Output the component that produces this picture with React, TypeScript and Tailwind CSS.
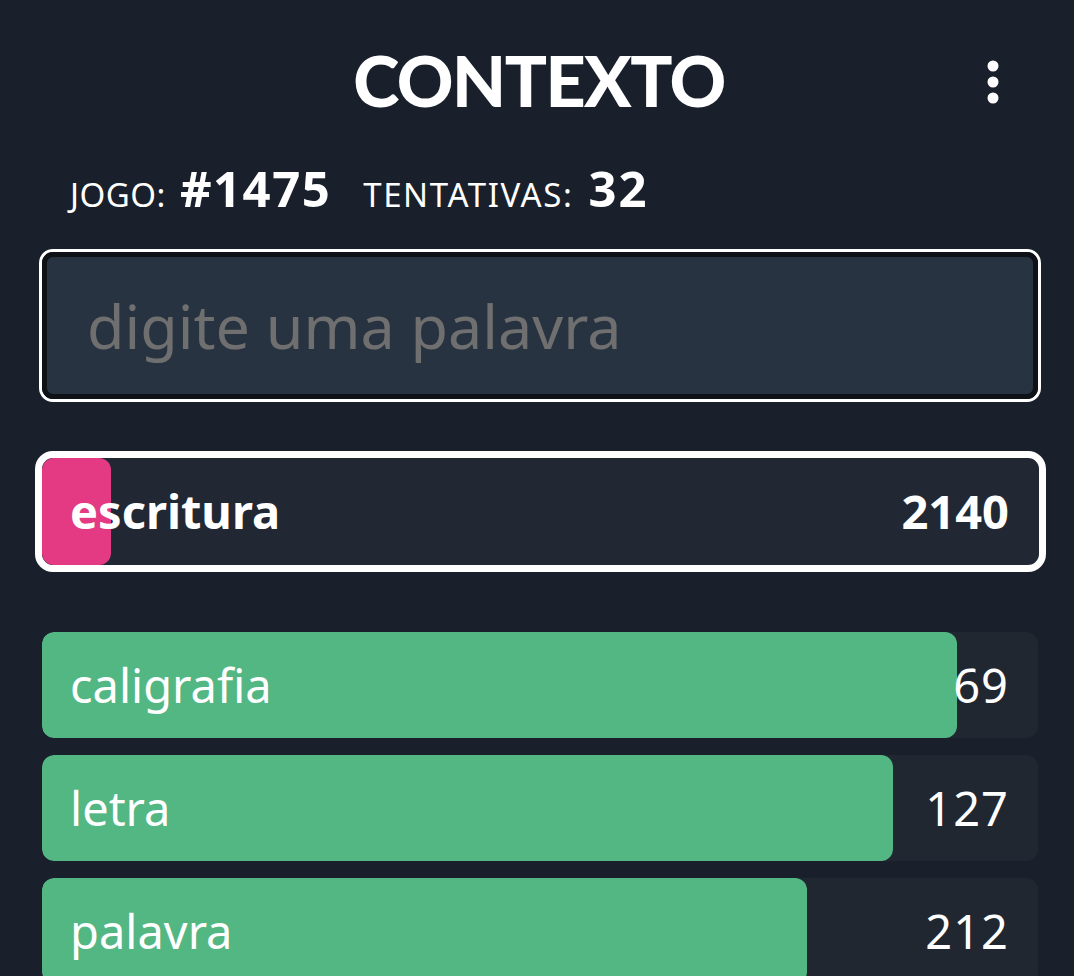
const guesses = [
  { word: 'caligrafia', distance: 69, pct: 91.9 },
  { word: 'letra', distance: 127, pct: 85.4 },
  { word: 'palavra', distance: 212, pct: 76.8 },
]

function Dots() {
  return (
    <svg width="14" height="44" viewBox="0 0 14 44" className="text-white">
      <circle cx="7" cy="6" r="5.5" fill="currentColor" />
      <circle cx="7" cy="22" r="5.5" fill="currentColor" />
      <circle cx="7" cy="38" r="5.5" fill="currentColor" />
    </svg>
  )
}

function Row({ word, distance, pct }: { word: string; distance: number; pct: number }) {
  return (
    <div className="relative h-[106px] overflow-hidden rounded-[12px] bg-[#212731]">
      <div
        className="absolute inset-y-0 left-0 rounded-[12px] bg-[#53b784]"
        style={{ width: `${pct}%` }}
      />
      <div className="relative flex h-full items-center justify-between pl-[28px] pr-[29px] text-[47px] leading-none text-white">
        <span>{word}</span>
        <span className="tracking-[1px]">{distance}</span>
      </div>
    </div>
  )
}

export default function App() {
  return (
    <div
      className="min-h-[976px] overflow-hidden bg-[#19202b] text-white"
      style={{ fontFamily: '"Noto Sans", Lato, sans-serif' }}
    >
      <header className="relative flex h-[160px] items-center justify-center">
        <h1
          className="pl-[4px] text-[70px] font-black leading-none tracking-[-1.5px]"
          style={{ fontFamily: 'Lato, sans-serif' }}
        >
          CONTEXTO
        </h1>
        <div className="absolute right-[74px] top-[60px]">
          <Dots />
        </div>
      </header>

      <div className="mt-[4px] flex h-[50px] items-baseline pl-[70px] text-[33px] leading-none">
        <span className="tracking-[0.5px]">JOGO:</span>
        <span className="ml-[14px] text-[49px] font-bold tracking-[1.5px]">#1475</span>
        <span className="ml-[32px] tracking-[1.6px]">TENTATIVAS:</span>
        <span className="ml-[15px] text-[49px] font-bold tracking-[2px]">32</span>
      </div>

      <div className="ml-[39px] mr-[33px] mt-[35px] rounded-[14px] border-[3px] border-white">
        <div className="flex h-[147px] items-center rounded-[11px] border-[5px] border-[#0e1115] bg-[#283341] pl-[40px]">
          <span className="text-[61px] leading-none text-[#6f6f6f]">digite uma palavra</span>
        </div>
      </div>

      <div className="ml-[35px] mr-[28px] mt-[49px] rounded-[18px] border-[7px] border-white bg-[#222833]">
        <div className="relative h-[107px]">
          <div className="absolute inset-y-0 left-0 w-[69px] rounded-[12px] bg-[#e33a83]" />
          <div className="relative flex h-full items-center justify-between pl-[28px] pr-[30px] text-[47px] font-bold leading-none">
            <span>escritura</span>
            <span>2140</span>
          </div>
        </div>
      </div>

      <div className="ml-[42px] mr-[36px] mt-[60px] flex flex-col gap-[17px]">
        {guesses.map((g) => (
          <Row key={g.word} {...g} />
        ))}
      </div>
    </div>
  )
}
